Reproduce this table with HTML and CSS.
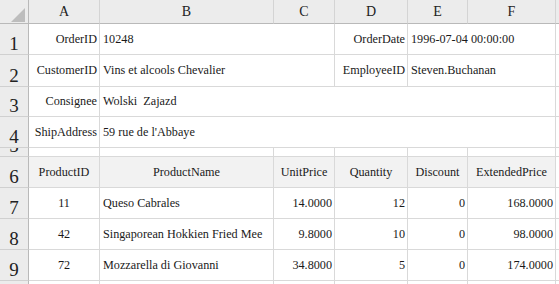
FILE: index.html
```html
<!DOCTYPE html>
<html>
<head>
<meta charset="utf-8">
<link rel="stylesheet" href="styles.css">
</head>
<body>
<div class="sheet">
  <div class="corner"><span class="tri"></span></div>
  <div class="ch">A</div><div class="ch">B</div><div class="ch">C</div><div class="ch">D</div><div class="ch">E</div><div class="ch">F</div><div class="ch edge"></div>

  <div class="rh">1</div>
  <div class="c r">OrderID</div>
  <div class="c span2">10248</div>
  <div class="c r">OrderDate</div>
  <div class="c span2">1996-07-04 00:00:00</div>
  <div class="c edge"></div>

  <div class="rh">2</div>
  <div class="c r">CustomerID</div>
  <div class="c span2">Vins et alcools Chevalier</div>
  <div class="c r">EmployeeID</div>
  <div class="c span2">Steven.Buchanan</div>
  <div class="c edge"></div>

  <div class="rh">3</div>
  <div class="c r">Consignee</div>
  <div class="c span5">Wolski&nbsp; Zajazd</div>
  <div class="c edge"></div>

  <div class="rh">4</div>
  <div class="c r">ShipAddress</div>
  <div class="c span5">59 rue de l'Abbaye</div>
  <div class="c edge"></div>

  <div class="rh">5</div>
  <div class="c"></div><div class="c"></div><div class="c"></div><div class="c"></div><div class="c"></div><div class="c"></div>
  <div class="c edge"></div>

  <div class="rh">6</div>
  <div class="c th">ProductID</div>
  <div class="c th">ProductName</div>
  <div class="c th">UnitPrice</div>
  <div class="c th">Quantity</div>
  <div class="c th">Discount</div>
  <div class="c th">ExtendedPrice</div>
  <div class="c edge"></div>

  <div class="rh">7</div>
  <div class="c m">11</div>
  <div class="c">Queso Cabrales</div>
  <div class="c r">14.0000</div>
  <div class="c r">12</div>
  <div class="c r">0</div>
  <div class="c r">168.0000</div>
  <div class="c edge"></div>

  <div class="rh">8</div>
  <div class="c m">42</div>
  <div class="c">Singaporean Hokkien Fried Mee</div>
  <div class="c r">9.8000</div>
  <div class="c r">10</div>
  <div class="c r">0</div>
  <div class="c r">98.0000</div>
  <div class="c edge"></div>

  <div class="rh">9</div>
  <div class="c m">72</div>
  <div class="c">Mozzarella di Giovanni</div>
  <div class="c r">34.8000</div>
  <div class="c r">5</div>
  <div class="c r">0</div>
  <div class="c r">174.0000</div>
  <div class="c edge"></div>

  <div class="rh"></div>
  <div class="c"></div><div class="c"></div><div class="c"></div><div class="c"></div><div class="c"></div><div class="c"></div>
  <div class="c edge"></div>
</div>
</body>
</html>
```
FILE: styles.css
```css
html, body {
  margin: 0;
  padding: 0;
  background: #ffffff;
}
.sheet {
  display: grid;
  grid-template-columns: 29px 71px 174px 61px 73px 60px 88px 3px;
  grid-template-rows: 24px 31px 32px 30px 31px 9px 31px 31px 31px 31px 31px;
  width: 559px;
  height: 284px;
  overflow: hidden;
  font-family: "Liberation Serif", "Times New Roman", serif;
  font-size: 12.2px;
  color: #1a1a1a;
}
.sheet > div {
  box-sizing: border-box;
  border-right: 1px solid #d9d9d9;
  border-bottom: 1px solid #d9d9d9;
  overflow: hidden;
  white-space: nowrap;
  min-width: 0;
}
.corner {
  background: #ececec;
  position: relative;
  border-right-color: #b9b9b9 !important;
  border-bottom-color: #b9b9b9 !important;
}
.tri {
  position: absolute;
  left: 11px;
  top: 8px;
  width: 0;
  height: 0;
  border-left: 14px solid transparent;
  border-bottom: 14px solid #bdbdbd;
}
.ch {
  background: #ececec;
  border-bottom-color: #b9b9b9 !important;
  border-right-color: #d4d4d4 !important;
  display: flex;
  align-items: center;
  justify-content: center;
  font-size: 14px;
  color: #222;
}
.rh {
  background: #ececec;
  border-right-color: #b9b9b9 !important;
  border-bottom-color: #d0d0d0 !important;
  display: flex;
  align-items: flex-end;
  justify-content: center;
  font-size: 19px;
  line-height: 19px;
  padding-bottom: 1px;
  color: #222;
}
.c {
  display: flex;
  align-items: center;
  padding: 0 3px;
}
.r {
  justify-content: flex-end;
  padding: 0 2px 0 0;
}
.m, .th {
  justify-content: center;
}
.th {
  background: #f2f2f2;
}
.span2 {
  grid-column: span 2;
}
.span5 {
  grid-column: span 5;
}
.sheet > .edge {
  border-right: none;
}
.ch.edge {
  background: #ececec;
}
```
